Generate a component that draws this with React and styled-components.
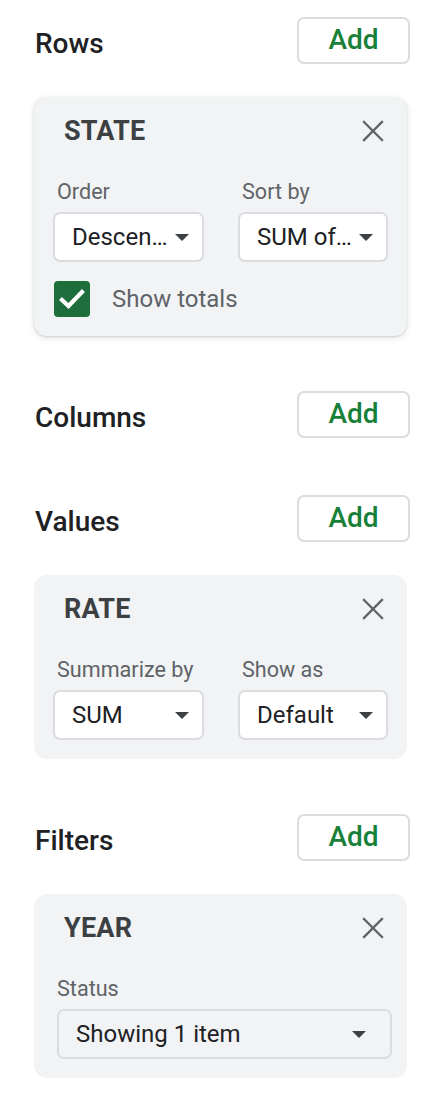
import React, { useState } from "react";
import styled, { createGlobalStyle } from "styled-components";

const GlobalStyle = createGlobalStyle`
  body {
    margin: 0;
    background: #ffffff;
    font-family: Roboto, "Liberation Sans", Arial, sans-serif;
  }
`;

const Page = styled.div`
  width: 376px;
  padding: 17px 0 40px 34px;
  display: flex;
  flex-direction: column;
  gap: 55px;
`;

const Section = styled.section`
  display: flex;
  flex-direction: column;
  gap: 33px;
  margin-bottom: ${(p) => p.$after || 0}px;
`;

const SectionHeader = styled.div`
  display: flex;
  justify-content: space-between;
  align-items: center;
  height: 47px;
`;

const Heading = styled.h2`
  margin: 6px 0 0 1px;
  font-size: 28px;
  font-weight: 500;
  color: #202124;
  line-height: 32px;
`;

const AddButton = styled.button`
  width: 113px;
  height: 47px;
  background: #fff;
  border: 2px solid #dadce0;
  border-radius: 7px;
  color: #188038;
  font-family: inherit;
  font-size: 28px;
  font-weight: 500;
  padding: 0 0 3px;
  cursor: pointer;
`;

const Card = styled.div`
  width: 373px;
  box-sizing: border-box;
  background: #f1f3f4;
  border-radius: 13px;
  padding: 19px;
  box-shadow: ${(p) =>
    p.$raised
      ? "0 1px 2px rgba(60,64,67,0.18), 0 2px 6px 1px rgba(60,64,67,0.1)"
      : "none"};
`;

const CardHeader = styled.div`
  display: flex;
  justify-content: space-between;
  align-items: center;
  height: 30px;
  padding: 0 3px 0 11px;
  margin-bottom: 33px;
`;

const CardTitle = styled.span`
  font-size: 27px;
  font-weight: 700;
  color: #3c4043;
  letter-spacing: 0.2px;
`;

const CloseButton = styled.button`
  background: none;
  border: none;
  padding: 0;
  width: 24px;
  height: 24px;
  display: flex;
  align-items: center;
  justify-content: center;
  cursor: pointer;
`;

const FieldGrid = styled.div`
  display: grid;
  grid-template-columns: 151px 150px;
  column-gap: 34px;
`;

const Field = styled.div`
  display: flex;
  flex-direction: column;
  margin: ${(p) => (p.$shifted ? "0 -4px 0 4px" : "0")};
`;

const Label = styled.span`
  font-size: 21.6px;
  color: #5f6368;
  line-height: 26px;
  margin: 0 0 7px ${(p) => (p.$flush ? 0 : 4)}px;
`;

const Select = styled.div`
  height: 50px;
  box-sizing: border-box;
  display: flex;
  align-items: center;
  justify-content: space-between;
  padding: 0 ${(p) => p.$right || 13}px 0 17px;
  background: ${(p) => (p.$flat ? "#f1f3f4" : "#fff")};
  border: 2px solid #dadce0;
  border-radius: 7px;
  font-size: 24px;
  color: #202124;
  white-space: nowrap;
`;

const Caret = styled.span`
  width: 0;
  height: 0;
  border-left: 7px solid transparent;
  border-right: 7px solid transparent;
  border-top: 7px solid #3c4043;
  flex-shrink: 0;
`;

const CheckRow = styled.label`
  display: flex;
  align-items: center;
  gap: 22px;
  margin-top: 19px;
  padding-left: 1px;
  font-size: 24px;
  color: #5f6368;
  cursor: pointer;
`;

const CheckBox = styled.span`
  width: 36px;
  height: 36px;
  border-radius: 4px;
  background: ${(p) => (p.$checked ? "#1e6e3b" : "#fff")};
  border: ${(p) => (p.$checked ? "none" : "2px solid #5f6368")};
  box-sizing: border-box;
  display: flex;
  align-items: center;
  justify-content: center;
`;

const CloseIcon = () => (
  <svg width="22" height="22" viewBox="0 0 22 22">
    <path
      d="M2 2 L20 20 M20 2 L2 20"
      stroke="#5f6368"
      strokeWidth="2.3"
      strokeLinecap="square"
    />
  </svg>
);

const CheckIcon = () => (
  <svg width="26" height="22" viewBox="0 0 26 22">
    <path
      d="M3 12 L9.5 18 L23 4"
      stroke="#fff"
      strokeWidth="4.2"
      fill="none"
      strokeLinecap="square"
    />
  </svg>
);

const SelectBox = ({ value, flat, right }) => (
  <Select $flat={flat} $right={right}>
    <span>{value}</span>
    <Caret />
  </Select>
);

const FieldCard = ({ title, raised, children }) => (
  <Card $raised={raised}>
    <CardHeader>
      <CardTitle>{title}</CardTitle>
      <CloseButton aria-label="Remove">
        <CloseIcon />
      </CloseButton>
    </CardHeader>
    {children}
  </Card>
);

const SectionTop = ({ title }) => (
  <SectionHeader>
    <Heading>{title}</Heading>
    <AddButton>Add</AddButton>
  </SectionHeader>
);

export default function App() {
  const [totals, setTotals] = useState(true);

  return (
    <>
      <GlobalStyle />
      <Page>
        <Section>
          <SectionTop title="Rows" />
          <FieldCard title="STATE" raised>
            <FieldGrid>
              <Field>
                <Label>Order</Label>
                <SelectBox value="Descen…" />
              </Field>
              <Field>
                <Label>Sort by</Label>
                <SelectBox value="SUM of…" />
              </Field>
            </FieldGrid>
            <CheckRow onClick={() => setTotals((t) => !t)}>
              <CheckBox $checked={totals}>{totals && <CheckIcon />}</CheckBox>
              Show totals
            </CheckRow>
          </FieldCard>
        </Section>

        <Section $after={2}>
          <SectionTop title="Columns" />
        </Section>

        <Section>
          <SectionTop title="Values" />
          <FieldCard title="RATE">
            <FieldGrid>
              <Field>
                <Label>Summarize by</Label>
                <SelectBox value="SUM" />
              </Field>
              <Field>
                <Label>Show as</Label>
                <SelectBox value="Default" />
              </Field>
            </FieldGrid>
          </FieldCard>
        </Section>

        <Section>
          <SectionTop title="Filters" />
          <FieldCard title="YEAR">
            <Field $shifted>
              <Label $flush>Status</Label>
              <SelectBox value="Showing 1 item" flat right={24} />
            </Field>
          </FieldCard>
        </Section>
      </Page>
    </>
  );
}
